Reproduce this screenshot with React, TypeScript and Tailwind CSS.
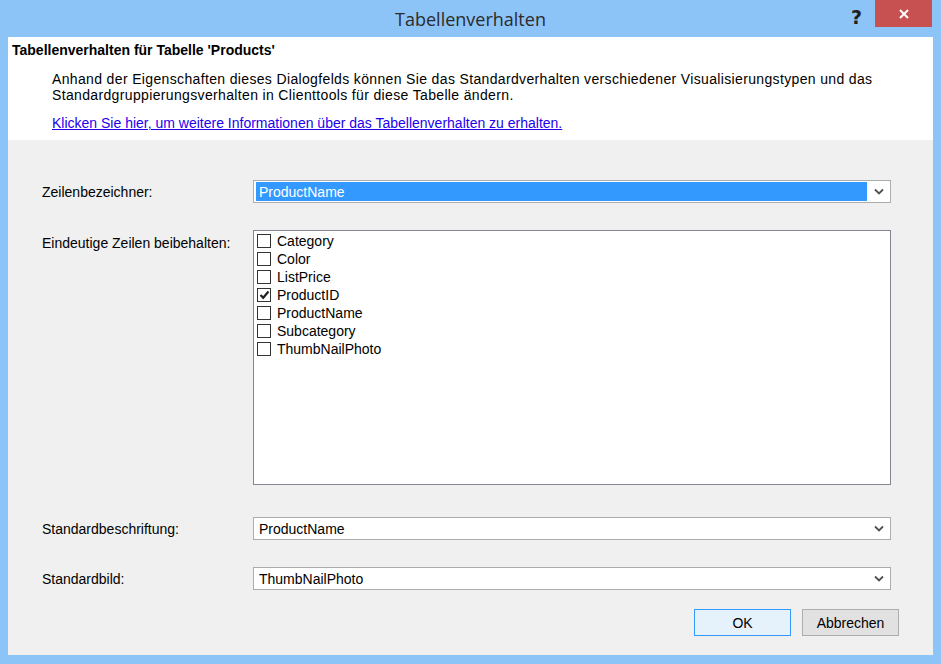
import { useState } from 'react';

const items = ['Category', 'Color', 'ListPrice', 'ProductID', 'ProductName', 'Subcategory', 'ThumbNailPhoto'];

function Chevron() {
  return (
    <svg width="10" height="7" viewBox="0 0 10 7" className="shrink-0">
      <path d="M1 1.5 L5 5.5 L9 1.5" fill="none" stroke="#505050" strokeWidth="1.8" />
    </svg>
  );
}

function Combo({ value, selected = false }: { value: string; selected?: boolean }) {
  return (
    <div className="flex-1 h-[23px] bg-white border border-[#acacac] flex items-center pl-[2px] pr-[6px]">
      <div
        className={`flex-1 h-[19px] flex items-center pl-[3px] pt-[2px] ${
          selected ? 'bg-[#3399ff] text-white mr-[7px]' : 'text-black'
        }`}
      >
        {value}
      </div>
      <Chevron />
    </div>
  );
}

function CheckBox({ checked }: { checked: boolean }) {
  return (
    <div className="w-[14px] h-[14px] border border-[#333333] bg-white flex items-center justify-center shrink-0">
      {checked && (
        <svg width="11" height="10" viewBox="0 0 11 10">
          <path d="M1.5 5 L4.2 7.8 L9.5 1.5" fill="none" stroke="#222" strokeWidth="2.2" />
        </svg>
      )}
    </div>
  );
}

export default function App() {
  const [checked, setChecked] = useState<Record<string, boolean>>({ ProductID: true });

  return (
    <div
      className="w-[941px] h-[664px] bg-[#8dc4f7] flex flex-col text-[14px] text-black"
      style={{ fontFamily: '"Liberation Sans", Arial, sans-serif' }}
    >
      {/* title bar */}
      <div className="relative h-[37px] flex items-center justify-center">
        <span className="text-[18px] text-[#2b2b2b] mt-[1px]" style={{ fontFamily: '"Open Sans", "Noto Sans", sans-serif' }}>
          Tabellenverhalten
        </span>
        <span className="absolute left-[851px] top-[3px] text-[19px] font-bold text-[#1f1f1f]" style={{ fontFamily: '"DejaVu Sans", sans-serif' }}>
          ?
        </span>
        <div className="absolute left-[875px] top-0 w-[57px] h-[27px] bg-[#c75050] flex items-center justify-center">
          <svg width="10" height="10" viewBox="0 0 10 10">
            <path d="M1 1 L9 9 M9 1 L1 9" stroke="white" strokeWidth="2" />
          </svg>
        </div>
      </div>

      <div className="flex-1 mx-[8px] mb-[9px] flex flex-col bg-[#f0f0f0]">
        {/* header */}
        <div className="h-[103px] bg-white pt-[5px] pl-[4px] leading-[16px]">
          <div className="font-bold text-[14px]">Tabellenverhalten für Tabelle 'Products'</div>
          <p className="pl-[40px] mt-[13px] tracking-[0.35px]">
            Anhand der Eigenschaften dieses Dialogfelds können Sie das Standardverhalten verschiedener Visualisierungstypen und das
            <br />
            Standardgruppierungsverhalten in Clienttools für diese Tabelle ändern.
          </p>
          <a href="#" className="block ml-[40px] mt-[12px] text-[#2200ee] underline w-fit">
            Klicken Sie hier, um weitere Informationen über das Tabellenverhalten zu erhalten.
          </a>
        </div>

        {/* form */}
        <div className="flex-1 flex flex-col pl-[34px] pr-[42px] pt-[40px]">
          <div className="flex items-center">
            <div className="w-[211px] pt-[2px]">Zeilenbezeichner:</div>
            <Combo value="ProductName" selected />
          </div>

          <div className="flex mt-[27px]">
            <div className="w-[211px] pt-[3px]">Eindeutige Zeilen beibehalten:</div>
            <div className="flex-1 h-[255px] bg-white border border-[#828790] pt-[1px] pl-[3px]">
              {items.map((it) => (
                <div
                  key={it}
                  className="h-[18px] flex items-center gap-[6px] cursor-default"
                  onClick={() => setChecked((c) => ({ ...c, [it]: !c[it] }))}
                >
                  <CheckBox checked={!!checked[it]} />
                  <span>{it}</span>
                </div>
              ))}
            </div>
          </div>

          <div className="flex items-center mt-[32px]">
            <div className="w-[211px] pt-[2px]">Standardbeschriftung:</div>
            <Combo value="ProductName" />
          </div>

          <div className="flex items-center mt-[27px]">
            <div className="w-[211px] pt-[2px]">Standardbild:</div>
            <Combo value="ThumbNailPhoto" />
          </div>

          <div className="flex justify-end gap-[11px] mt-[19px] mr-[-8px]">
            <button className="w-[97px] h-[27px] bg-[#e5f1fb] border border-[#3399ff] text-[14px] pt-[1px]">OK</button>
            <button className="w-[97px] h-[27px] bg-[#e1e1e1] border border-[#adadad] text-[14px] pt-[1px]">Abbrechen</button>
          </div>
        </div>
      </div>
    </div>
  );
}
